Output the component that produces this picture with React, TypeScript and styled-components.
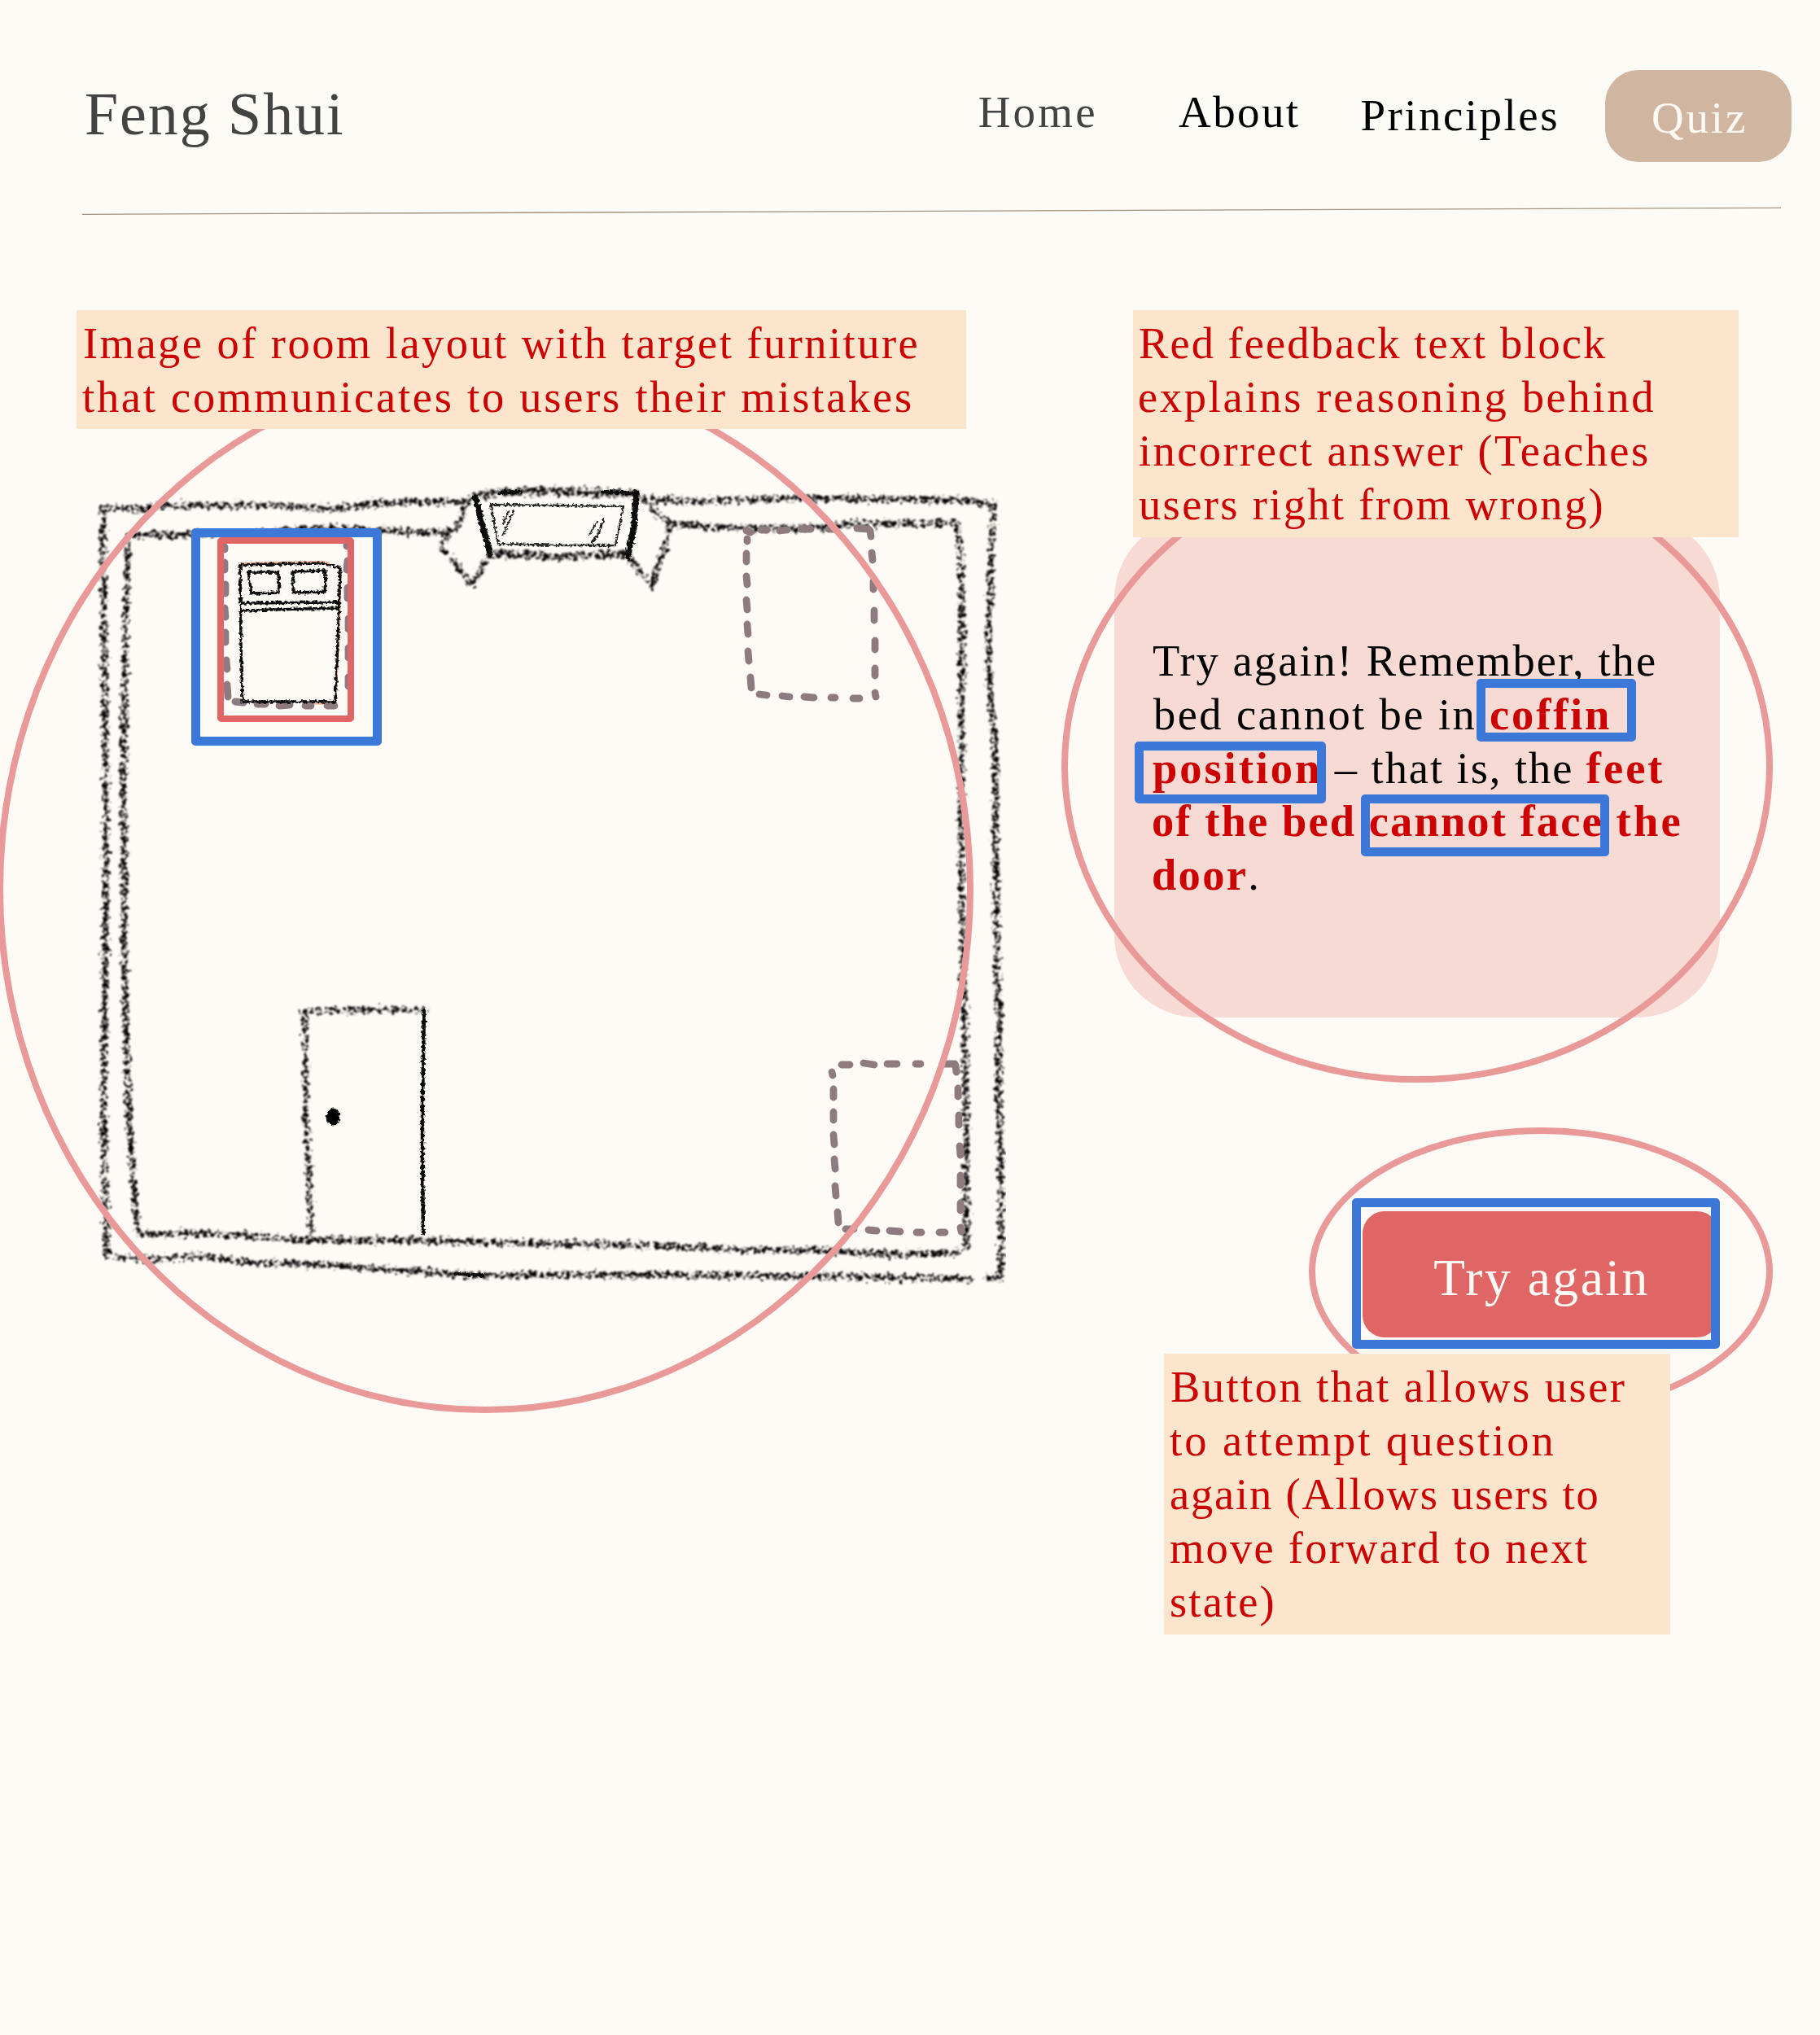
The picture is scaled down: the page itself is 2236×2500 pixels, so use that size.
import React from 'react';
import styled, { createGlobalStyle } from 'styled-components';

const GlobalStyle = createGlobalStyle`
  html, body {
    margin: 0;
    padding: 0;
    background: #fefaf5;
  }
`;

const Page = styled.div`
  position: relative;
  width: 2236px;
  height: 2500px;
  overflow: hidden;
  background: #fefaf5;
  color: #000;
  font-family: 'Liberation Serif', 'Times New Roman', serif;
  font-size: 54.5px;
  line-height: 66px;
`;

/* ---------- header ---------- */

const Header = styled.header`
  box-sizing: border-box;
  height: 381px;
  padding: 0 23px 44px 26px;
`;

const HeaderTint = styled.div`
  height: 337px;
  background: #fdfbf6;
`;

const TopBar = styled.div`
  box-sizing: border-box;
  display: flex;
  justify-content: space-between;
  align-items: flex-start;
  height: 250px;
  padding: 86px 12px 0 79px;
`;

const Brand = styled.h1`
  margin: 9px 0 0 -1px;
  font-size: 74px;
  font-weight: 400;
  line-height: 90px;
  letter-spacing: 1.92px;
  color: #434343;
`;

const Nav = styled.nav`
  display: flex;
  align-items: flex-start;
  font-size: 55px;
`;

const NavLink = styled.a<{ $drop: number; $after: number; $spacing: number; $tone?: string }>`
  margin-top: ${(p) => p.$drop}px;
  margin-right: ${(p) => p.$after}px;
  letter-spacing: ${(p) => p.$spacing}px;
  color: ${(p) => p.$tone ?? '#000'};
`;

const QuizPill = styled.a`
  box-sizing: border-box;
  width: 229px;
  height: 113px;
  padding: 26px 0 0 57px;
  border-radius: 41px;
  background: #d0b6a0;
  color: #fefaf5;
  letter-spacing: 2.8px;
`;

const Rule = styled.svg`
  display: block;
  width: 2088px;
  height: 20px;
  margin-left: 74px;
`;

/* ---------- body ---------- */

const Columns = styled.main`
  display: flex;
  align-items: flex-start;
`;

const RoomColumn = styled.section`
  width: 1275px;
  padding-left: 94px;
`;

const FeedbackColumn = styled.section`
  width: 867px;
`;

const Note = styled.div<{ $width: number; $height: number; $top?: number; $left?: number; $pad: number }>`
  position: relative;
  z-index: 2;
  box-sizing: border-box;
  width: ${(p) => p.$width}px;
  height: ${(p) => p.$height}px;
  margin: ${(p) => p.$top ?? 0}px 0 0 ${(p) => p.$left ?? 0}px;
  padding: 8px 0 0 ${(p) => p.$pad}px;
  background: #fce5cd;
  color: #cc0000;
`;

const Line = styled.div<{ $spacing?: number; $indent?: number }>`
  height: 66px;
  margin-left: ${(p) => p.$indent ?? 0}px;
  letter-spacing: ${(p) => p.$spacing ?? 0}px;
  white-space: pre;
`;

const Words = styled.span<{ $spacing: number }>`
  letter-spacing: ${(p) => p.$spacing}px;
`;

const Strong = styled.strong<{ $spacing: number }>`
  letter-spacing: ${(p) => p.$spacing}px;
  font-weight: 700;
  color: #cc0000;
`;

const Room = styled.svg`
  display: block;
  width: 1142px;
  height: 1020px;
  margin-top: 53px;
`;

const Panel = styled.div`
  position: relative;
  box-sizing: border-box;
  width: 744px;
  height: 616px;
  margin-top: -26px;
  padding: 145px 0 0 48px;
  border-radius: 102px;
  background: #f7dad3;
  line-height: 65.8px;

  ${Line} {
    height: 65.8px;
  }
`;

const TryAgain = styled.button`
  display: block;
  box-sizing: border-box;
  width: 438px;
  height: 155px;
  margin: 238px 0 0 305px;
  padding: 0 0 0 2px;
  padding-bottom: 0;
  border: 0;
  border-radius: 27px;
  background: #e06666;
  color: #fefaf5;
  font: 63.5px/80px 'Liberation Serif', 'Times New Roman', serif;
  line-height: 163px;
  letter-spacing: 2.54px;
`;

/* ---------- annotations lying over the page ---------- */

const Ring = styled.div<{ $x: number; $y: number; $w: number; $h: number }>`
  position: absolute;
  z-index: 1;
  box-sizing: border-box;
  left: ${(p) => p.$x}px;
  top: ${(p) => p.$y}px;
  width: ${(p) => p.$w}px;
  height: ${(p) => p.$h}px;
  border: 8px solid #ea9999;
  border-radius: 50%;
`;

const Marker = styled.div<{ $x: number; $y: number; $w: number; $h: number; $tone?: string; $stroke?: number }>`
  position: absolute;
  z-index: 3;
  box-sizing: border-box;
  left: ${(p) => p.$x}px;
  top: ${(p) => p.$y}px;
  width: ${(p) => p.$w}px;
  height: ${(p) => p.$h}px;
  border: ${(p) => p.$stroke ?? 11}px solid ${(p) => p.$tone ?? '#3c78d8'};
  border-radius: 5px;
`;

/* ---------- room drawing ---------- */

const WALLS = [
  'M128 625L150 624L176 626L200 621L262 621L330 620L368 623L418 625L456 619L506 616L575 617',
  'M160 658L190 657L236 656L300 656L360 651L420 649L467 652L513 654L553 653',
  'M127 625L127 700L128 800L130 980L130 1100L129 1200L127 1333L129 1467L132 1543',
  'M157 668L154 780L153 847L152 980L153 1200L156 1317L160 1400L165 1467L170 1513',
  'M173 1517L226 1515L291 1517L330 1520L368 1523L521 1524L697 1528L800 1530L900 1535L1000 1536L1100 1541L1176 1539',
  'M144 1544L188 1547L245 1543L295 1550L406 1554L483 1560L594 1567L697 1566L800 1566L900 1567L1000 1568L1191 1571',
  'M1212 1570L1229 1570',
  'M789 613L859 616L936 613L1014 612L1082 613L1179 614L1198 617L1219 620',
  'M1221 619L1217 697L1214 780L1217 863L1222 900L1223 1000L1224 1116L1225 1200L1228 1260L1227 1327L1230 1460L1230 1566',
  'M1176 645L1181 697L1182 780L1181 900L1181 1000L1182 1120L1185 1260L1187 1393L1187 1534',
  'M827 643L870 647L912 649L1009 648L1053 643L1110 643L1174 643',
];

const MEDIUM = [
  'M575 612L563 643L541 670L579 719L602 682',
  'M791 613L810 633L824 643L817 673L800 720L771 682',
  'M378 1243L429 1241L521 1240',
  'M374 1242L375 1300L376 1367L379 1440L382 1517',
];

const HEAVY = [
  'M582 610L611 605L684 603L784 607',
  'M602 680L684 683L771 681',
];

const DARK = [
  'M521 1242L519 1350L519 1430L520 1515',
  'M614 605L640 604',
  'M740 604L782 606',
  'M560 1565L594 1567',
];

const POSTS = ['M584 612L602 680', 'M781 606L779 647L771 684'];

const FINE = [
  'M603 620L684 621L766 622L756 670L684 670L612 668Z',
  'M625 628L618 643',
  'M631 628L618 657',
  'M733 641L724 657',
  'M742 637L736 655L727 667',
];

const BED = [
  'M295 694L340 693L397 692L418 698L416 760L412 862L298 862L296 790Z',
  'M305 703L342 703L343 728L309 729Z',
  'M360 702L400 701L399 727L360 728Z',
  'M297 741L415 740',
  'M297 750L415 747',
];

/* each pair of points is one dash of a drop target */
const DASHES: [number, number, number, number][] = [
  [276, 672, 276, 675], [276, 691, 276, 700], [277, 718, 277, 729], [276, 747, 277, 758],
  [277, 777, 277, 789], [278, 811, 279, 822], [279, 841, 280, 856],
  [289, 862, 299, 863], [316, 865, 326, 865], [343, 867, 356, 866], [375, 867, 382, 867], [402, 867, 411, 867],
  [426, 669, 426, 671], [427, 689, 426, 700], [427, 722, 427, 735], [428, 760, 428, 773], [428, 796, 428, 808], [428, 832, 428, 843],
  [917, 652, 922, 654], [935, 651, 942, 651], [958, 652, 967, 651], [984, 650, 996, 650], [1018, 650, 1026, 650], [1053, 649, 1067, 650],
  [918, 662, 918, 665], [917, 680, 917, 690], [917, 708, 918, 718], [917, 737, 918, 749],
  [918, 767, 919, 779], [919, 800, 920, 812], [922, 832, 923, 845],
  [933, 853, 942, 854], [961, 855, 970, 856], [988, 856, 1000, 857], [1021, 857, 1026, 857], [1048, 858, 1056, 858],
  [1069, 652, 1070, 659], [1071, 679, 1072, 688], [1073, 714, 1073, 724], [1074, 750, 1074, 762],
  [1075, 787, 1075, 798], [1075, 821, 1075, 830], [1075, 851, 1076, 856],
  [1022, 1317, 1023, 1321], [1024, 1338, 1024, 1348], [1024, 1366, 1024, 1376], [1024, 1394, 1025, 1406],
  [1025, 1424, 1026, 1436], [1026, 1457, 1027, 1469], [1029, 1489, 1030, 1502],
  [1034, 1308, 1044, 1308], [1061, 1306, 1074, 1308], [1090, 1307, 1102, 1307], [1125, 1307, 1131, 1307], [1158, 1307, 1173, 1307],
  [1174, 1309, 1175, 1317], [1177, 1337, 1177, 1347], [1178, 1370, 1178, 1382], [1179, 1408, 1180, 1419],
  [1180, 1444, 1180, 1456], [1180, 1478, 1180, 1487], [1180, 1508, 1181, 1513],
  [1039, 1510, 1049, 1510], [1067, 1511, 1077, 1512], [1093, 1512, 1106, 1513], [1126, 1514, 1132, 1514], [1154, 1514, 1161, 1514],
];

const RoomDrawing = () => (
  <Room viewBox="94 580 1142 1020" fill="none" strokeLinejoin="round" strokeLinecap="round">
    <defs>
      <filter id="charcoal" filterUnits="userSpaceOnUse" x="94" y="580" width="1142" height="1020" colorInterpolationFilters="sRGB">
        <feTurbulence type="fractalNoise" baseFrequency="0.2" numOctaves="2" seed="4" result="wobble" />
        <feDisplacementMap in="SourceGraphic" in2="wobble" scale="14" xChannelSelector="R" yChannelSelector="G" result="rough" />
        <feTurbulence type="fractalNoise" baseFrequency="0.22" numOctaves="2" seed="11" />
        <feColorMatrix values="0 0 0 0 0  0 0 0 0 0  0 0 0 0 0  0 4.5 0 0 -1.55" result="grain" />
        <feComposite in="rough" in2="grain" operator="in" />
        <feGaussianBlur stdDeviation="0.9" />
      </filter>
      <filter id="pencil" filterUnits="userSpaceOnUse" x="94" y="580" width="1142" height="1020" colorInterpolationFilters="sRGB">
        <feTurbulence type="fractalNoise" baseFrequency="0.3" numOctaves="2" seed="7" result="wobble" />
        <feDisplacementMap in="SourceGraphic" in2="wobble" scale="6" xChannelSelector="R" yChannelSelector="G" />
        <feGaussianBlur stdDeviation="0.7" />
      </filter>
    </defs>
    <g filter="url(#charcoal)" stroke="#000">
      <g strokeWidth="7.5">{WALLS.map((d) => <path key={d} d={d} />)}</g>
      <g strokeWidth="6.5">{MEDIUM.map((d) => <path key={d} d={d} />)}</g>
      <g strokeWidth="9.5">{HEAVY.map((d) => <path key={d} d={d} />)}</g>
    </g>
    <g filter="url(#pencil)" stroke="#0a0a0a">
      <g strokeWidth="4.5">{DARK.map((d) => <path key={d} d={d} />)}</g>
      <g strokeWidth="7.5">{POSTS.map((d) => <path key={d} d={d} />)}</g>
      <g strokeWidth="2.3" strokeOpacity="0.9">{FINE.map((d) => <path key={d} d={d} />)}</g>
      <ellipse cx="409" cy="1372" rx="7" ry="9" fill="#000" strokeWidth="3" />
    </g>
    <path d="M296 692L340 691L397 690L404 692M419 700L416 790L412 862M372 864L411 865" stroke="#e9a98c" strokeWidth="2" />
    <g stroke="#8d7b80" strokeWidth="8.8">
      {DASHES.map(([x1, y1, x2, y2]) => <line key={`${x1}-${y1}`} x1={x1} y1={y1} x2={x2} y2={y2} />)}
    </g>
    <g filter="url(#pencil)" stroke="#0a0a0a" strokeWidth="3.3">
      {BED.map((d) => <path key={d} d={d} />)}
    </g>
  </Room>
);

export default function App() {
  return (
    <Page>
      <GlobalStyle />
      <Header>
        <HeaderTint>
          <TopBar>
            <Brand>Feng Shui</Brand>
            <Nav>
              <NavLink $drop={19} $after={99} $spacing={3.23} $tone="#434343">Home</NavLink>
              <NavLink $drop={19} $after={74} $spacing={2.4}>About</NavLink>
              <NavLink $drop={23} $after={56} $spacing={2.45}>Principles</NavLink>
              <QuizPill>Quiz</QuizPill>
            </Nav>
          </TopBar>
          <Rule viewBox="0 0 2088 20">
            <line x1="1" y1="13.3" x2="2088" y2="5.3" stroke="#a39481" strokeWidth="1.3" />
          </Rule>
        </HeaderTint>
      </Header>

      <Columns>
        <RoomColumn>
          <Note $width={1093} $height={146} $pad={8}>
            <Line $spacing={2.45}>Image of room layout with target furniture</Line>
            <Line $spacing={2.74} $indent={-1}>that communicates to users their mistakes</Line>
          </Note>
          <RoomDrawing />
        </RoomColumn>

        <FeedbackColumn>
          <Note $width={744} $height={279} $left={23} $pad={8}>
            <Line $spacing={2.05} $indent={-1}>Red feedback text block</Line>
            <Line $spacing={2.68} $indent={-2}>explains reasoning behind</Line>
            <Line $spacing={2.42} $indent={-1}>incorrect answer (Teaches</Line>
            <Line $spacing={2.34} $indent={-1}>users right from wrong)</Line>
          </Note>
          <Panel>
            <Line $spacing={2.05} $indent={-1}>Try again! Remember, the</Line>
            <Line>
              <Words $spacing={2.4}>bed cannot be in </Words>
              <Strong $spacing={2.82}>coffin</Strong>
            </Line>
            <Line $indent={-1}>
              <Strong $spacing={2.94}>position</Strong>
              <Words $spacing={1.93}> – that is, the </Words>
              <Strong $spacing={2.99}>feet</Strong>
            </Line>
            <Line $indent={-2}>
              <Strong $spacing={2.1}>of the bed cannot face </Strong>
              <Strong $spacing={3.3}>the</Strong>
            </Line>
            <Line $indent={-2}>
              <Strong $spacing={2.3}>door</Strong>
              <Words $spacing={0}>.</Words>
            </Line>
          </Panel>
          <TryAgain>Try again</TryAgain>
          <Note $width={622} $height={345} $top={20} $left={61} $pad={8}>
            <Line $spacing={2.45}>Button that allows user</Line>
            <Line $spacing={3} $indent={-1}>to attempt question</Line>
            <Line $spacing={1.8} $indent={-1}>again (Allows users to</Line>
            <Line $spacing={2.22} $indent={-1}>move forward to next</Line>
            <Line $spacing={2.15} $indent={-1}>state)</Line>
          </Note>
        </FeedbackColumn>
      </Columns>

      <Ring $x={-4} $y={449} $w={1200} $h={1287} />
      <Ring $x={1304} $y={553} $w={874} $h={777} />
      <Ring $x={1608} $y={1385} $w={570} $h={354} />

      <Marker $x={267} $y={660} $w={168} $h={227} $tone="#e06666" $stroke={8} />
      <Marker $x={235} $y={649} $w={234} $h={267} />
      <Marker $x={1814} $y={834} $w={196} $h={77} />
      <Marker $x={1394} $y={911} $w={235} $h={76} />
      <Marker $x={1672} $y={976} $w={305} $h={76} />
      <Marker $x={1661} $y={1472} $w={452} $h={185} />
    </Page>
  );
}
